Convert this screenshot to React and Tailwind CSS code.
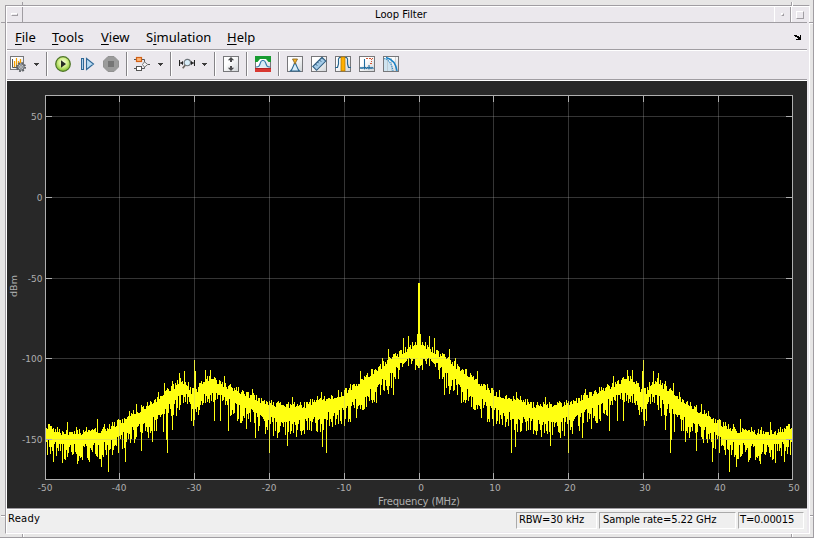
const MENU = [
  { key: "F", rest: "ile", width: "w-[37px]" },
  { key: "T", rest: "ools", width: "w-[49px]" },
  { key: "V", rest: "iew", width: "w-[45px]" },
  { key: "S", mid: "i", rest: "mulation", width: "w-[81px]" },
  { key: "H", rest: "elp", width: "w-[40px]" },
];

// [x, top, bottom] of the solid part of the trace, left half only
const BAND = [
  [45, 428, 437], [60, 434, 442], [85, 435, 442], [100, 433, 441], [110, 429, 439],
  [120, 424, 434], [130, 416, 425], [140, 412, 422], [155, 403, 415], [170, 391, 402],
  [180, 384, 393], [188, 387, 391], [191, 394, 408], [196, 393, 408], [199, 389, 400],
  [204, 382, 393], [212, 380, 390], [222, 387, 394], [235, 392, 402], [250, 397, 407],
  [265, 404, 415], [275, 406, 416], [290, 407, 418], [305, 407, 417], [318, 402, 413],
  [330, 401, 410], [345, 394, 406], [355, 387, 398], [370, 377, 388], [385, 365, 375],
  [400, 355, 362], [412, 348, 355], [418, 346, 361],
];

const DIPS = {
  53: 462, 56: 456, 62: 463, 65: 460, 68: 453, 77: 464, 79: 456, 87: 458, 89: 462, 92: 452,
  101: 467, 108: 472, 112: 455, 122: 449, 125: 462, 131: 439, 136: 437, 141: 451, 147: 432,
  152: 442, 163: 432, 166: 440, 167: 453, 172: 430, 177: 408, 191: 421, 193: 426, 196: 412,
  214: 421, 220: 421, 228: 431, 237: 421, 246: 429, 255: 438, 258: 431, 265: 434, 269: 453,
  277: 438, 287: 446, 291: 431, 304: 434, 309: 430, 322: 447, 326: 453, 332: 427, 344: 426,
  350: 422, 356: 418, 364: 409, 366: 407, 376: 403, 388: 394, 393: 395, 398: 379, 408: 366,
  415: 370,
};

const PEAKS = {
  67: 422, 76: 427, 86: 427, 97: 419, 104: 424, 118: 419, 136: 404, 141: 405, 158: 392,
  164: 383, 172: 381, 179: 373, 184: 371, 194: 360, 195: 371, 205: 370, 210: 370, 224: 376,
  230: 384, 252: 389, 292: 397, 309: 402, 321: 392, 338: 390, 350: 384, 360: 371, 371: 369,
  382: 358, 388: 349, 403: 338, 408: 336, 417: 334, 418: 283,
};

const noise = (n) => {
  const v = Math.sin(n * 127.1 + 11.7) * 43758.5453;
  return v - Math.floor(v);
};

function column(x) {
  const i = Math.max(1, BAND.findIndex((p) => p[0] >= x));
  const [x0, t0, b0] = BAND[i - 1];
  const [x1, t1, b1] = BAND[i];
  const k = (x - x0) / (x1 - x0);
  const top = t0 + (t1 - t0) * k - noise(x) * 7 + 1;
  const tail = x > 180 && x < 230 ? 12 : x > 395 ? 9 : 19;
  const bottom = b0 + (b1 - b0) * k + 1 + Math.pow(noise(x + 900), 1.5) * tail;
  return [Math.round(PEAKS[x] ?? top), Math.round(DIPS[x] ?? bottom)];
}

// the spectrum is symmetric around 0 MHz
let trace = "";
for (let x = 45; x <= 418; x++) {
  const [top, bottom] = column(x);
  trace += `M${x} ${top}h1V${bottom}h-1z`;
  trace += `M${837 - x} ${top}h1V${bottom}h-1z`;
}

const X_TICKS = [
  [45, "-50"], [119, "-40"], [194, "-30"], [269, "-20"], [344, "-10"], [419, "0"],
  [493, "10"], [568, "20"], [643, "30"], [718, "40"], [792, "50"],
];
const Y_TICKS = [[116, "50"], [197, "0"], [278, "-50"], [358, "-100"], [439, "-150"]];

const Spectrum = () => (
  <svg
    viewBox="7 81 800 427"
    className="block h-[427px] w-[800px] bg-[#282828]"
    fontFamily="'DejaVu Sans', sans-serif"
    fontSize="9"
    fill="#afafaf"
  >
    <g shapeRendering="crispEdges">
      <rect x="45" y="95" width="748" height="385" fill="#000" />
      <path d={trace} fill="#ffff11" />
      {X_TICKS.slice(1, -1).map(([x]) => (
        <g key={x}>
          <rect x={x} y="96" width="1" height="383" opacity="0.3" />
          <rect x={x} y="96" width="1" height="6" />
          <rect x={x} y="473" width="1" height="6" />
        </g>
      ))}
      {Y_TICKS.map(([y]) => (
        <g key={y}>
          <rect x="46" y={y} width="746" height="1" opacity="0.3" />
          <rect x="46" y={y} width="6" height="1" />
          <rect x="786" y={y} width="6" height="1" />
        </g>
      ))}
      {/* redraw the carrier over the centre grid line */}
      <rect x="418" y="283" width="2" height="78" fill="#ffff11" />
      <path d="M45.5 95.5h747v384h-747z" fill="none" stroke="#afafaf" />
    </g>
    {X_TICKS.map(([x, label]) => (
      <text key={label} x={label[0] === "-" ? x + 0.2 : x + 2} y="491" textAnchor="middle">{label}</text>
    ))}
    {Y_TICKS.map(([y, label]) => (
      <text key={label} x="42.5" y={y + 4} textAnchor="end">{label}</text>
    ))}
    <text x="419" y="505" fontSize="10" textAnchor="middle" textLength="82">Frequency (MHz)</text>
    <text transform="translate(17 286) rotate(-90)" fontSize="9.5" textAnchor="middle">dBm</text>
  </svg>
);

const Icon = ({ className = "", children }) => (
  <svg viewBox="0 0 16 16" className={`h-4 w-4 shrink-0 ${className}`} fill="none">{children}</svg>
);

const Box = () => (
  <rect x="0.5" y="0.5" width="15" height="15" fill="url(#paper)" stroke="#77777a" />
);

const Arrow = ({ className = "" }) => (
  <svg viewBox="0 0 5 3" className={`h-[3px] w-[5px] shrink-0 ${className}`}>
    <path d="M0 0h5v1H4v1H3v1H2V2H1V1H0z" fill="#3c3c3c" shapeRendering="crispEdges" />
  </svg>
);

const Separator = ({ className = "" }) => (
  <div className={`h-6 w-0.5 shrink-0 border-l border-[#858387] bg-white ${className}`} />
);

const Toolbar = () => (
  <div className="flex h-[28px] items-center pb-0.5 pl-[3px]">
    <svg className="h-0 w-0">
      <defs>
        <linearGradient id="paper" x1="0" y1="0" x2="1" y2="1">
          <stop offset="0.35" stopColor="#fff" />
          <stop offset="1" stopColor="#cfd3d6" />
        </linearGradient>
        <radialGradient id="run" cx="0.5" cy="0.4" r="0.6">
          <stop offset="0" stopColor="#fbffe8" />
          <stop offset="0.5" stopColor="#d3ef8c" />
          <stop offset="1" stopColor="#7dbb2a" />
        </radialGradient>
      </defs>
    </svg>
    <Icon>
      <rect x="0.5" y="0.5" width="13" height="13" fill="url(#paper)" stroke="#77777a" />
      <path d="M2.5 3v8.5H9" stroke="#58585a" />
      <path d="M4.5 5v6M6.5 2v9M8.5 5v4M10.5 3v4" stroke="#f5a000" strokeWidth="1.2" />
      <circle cx="11" cy="11" r="4.1" stroke="#5c6064" strokeWidth="1.8" strokeDasharray="1.8 1.4" />
      <circle cx="11" cy="11" r="3.2" fill="#bfc3c8" stroke="#606469" />
      <circle cx="11" cy="11" r="1.3" fill="#f5f5f5" stroke="#65696d" strokeWidth="0.8" />
    </Icon>
    <Arrow className="ml-2" />
    <Separator className="ml-[7px]" />
    <Icon className="ml-[7px]">
      <circle cx="8" cy="8" r="7.3" fill="url(#run)" stroke="#4d7328" strokeWidth="1.2" />
      <path d="M6 4.2v7.6L11 8z" fill="#262b25" />
    </Icon>
    <Icon className="ml-[10px]">
      <path d="M.5 2.5h2v11h-2zM5.5 2.5v11L12.5 8z" fill="#b9dcf4" stroke="#2f6796" strokeWidth="1.1" />
    </Icon>
    <Icon className="ml-1.5">
      <path d="M5 .5h6L15.5 5v6L11 15.5H5L.5 11V5z" fill="#9b9b9b" stroke="#929292" strokeLinejoin="round" />
      <rect x="5" y="5" width="6" height="6" fill="#757575" />
    </Icon>
    <Separator className="ml-[7px]" />
    <Icon className="ml-1.5">
      <path d="M0 3.5h10.5V7M0 12.5h2M8 12.5h2.5V10" stroke="#555" />
      <rect x="2.5" y="1.5" width="5" height="4" fill="#ffb676" stroke="#d26116" strokeWidth="1.2" />
      <rect x="2.5" y="10.5" width="5" height="4" fill="#fff" stroke="#555" />
      <path d="M14 8.5h2" stroke="#555" />
      <path d="M10.5 5.8 13.7 8.5 10.5 11.2 8.5 8.5z" fill="#f3f3f3" stroke="#6b6b6b" strokeWidth="0.9" />
    </Icon>
    <Arrow className="ml-2" />
    <Separator className="ml-[7px]" />
    <Icon className="ml-[7px]">
      <path d="M.5 4v6M15.5 4v6M1 7h3M12 7h3" stroke="#222" strokeWidth="1.1" />
      <path d="M4 4.8v4.4L1.8 7zM12 4.8v4.4L14.2 7z" fill="#222" />
      <circle cx="8.3" cy="6.6" r="3.2" fill="#d8eef9" stroke="#6e7479" strokeWidth="1.1" />
      <path d="m6.2 9.2-2.5 3" stroke="#6b655f" strokeWidth="1.7" />
    </Icon>
    <Arrow className="ml-[7px]" />
    <Separator className="ml-[7px]" />
    <Icon className="ml-[7px]">
      <Box />
      <path d="M8 1 4.8 4.2H7V6h2V4.2h2.2zM8 15l-3.2-3.2H7V10h2v1.8h2.2z" fill="#4a4a4c" />
    </Icon>
    <Separator className="ml-[7px]" />
    <Icon className="ml-[7px]">
      <Box />
      <path d="M0 0h16v6h-2.5L11 3H5L2.5 6H0z" fill="#189b31" />
      <path d="M0 12h16v4H0z" fill="#d93932" />
      <path d="M0 12.5h16" stroke="#a71e21" strokeWidth="0.8" />
      <path d="M1 11c3 0 3.5-1 4.3-4S7 4.5 8 4.5s1.8-.4 2.7 2.5S12 11 15 11" fill="#d8ebf5" stroke="#3178a8" strokeWidth="1.1" />
    </Icon>
    <Separator className="ml-[7px]" />
    <Icon className="ml-[7px]">
      <Box />
      <path d="M3.5 15C6 13 6.5 8 8 7c1.5 1 2 6 4.5 8z" fill="#d8edf9" stroke="#27658f" strokeWidth="1.1" />
      <path d="M5.5 3h5L8.7 6.3v1.2H7.3V6.3z" fill="#f8b522" stroke="#8a6725" strokeWidth="0.9" />
    </Icon>
    <Icon className="ml-2">
      <Box />
      <path d="M1.8 10.5 11 1.3l3.8 3.8-9.2 9.2z" fill="#a5cce8" stroke="#315f82" strokeWidth="1.1" />
      <path d="m4.5 8 1.7 1.7M6.5 6l1.2 1.2M8.5 4l1.7 1.7M10.5 2l1.2 1.2" stroke="#244e70" strokeWidth="0.9" />
    </Icon>
    <Icon className="ml-2">
      <Box />
      <path d="M0 11.5h2.5L3.5 8V3l1-1.5h7l1 1.5v5l1 3.5H16" stroke="#27658f" strokeWidth="1.2" />
      <rect x="6" y="1" width="4" height="14" fill="#ffb000" stroke="#b57900" strokeWidth="0.8" />
    </Icon>
    <Icon className="ml-2">
      <Box />
      <path d="m1 12.5 1-1 1 1 1-1 1.5 1V3v9.5l1-1 1 1 1-1 1.5 1V9v3.5l1-1 1 1 1-1 1.5 1" stroke="#1f6c9f" strokeWidth="1.1" />
      <path d="M7 2.5h7M11 7.5h3" stroke="#d35432" strokeDasharray="2 1" />
      <path d="M12.5 3v4" stroke="#d35432" strokeDasharray="1 1" />
    </Icon>
    <Icon className="ml-2">
      <Box />
      <path d="M1 2c5 1 8 6 9 13H1z" fill="#cfe4f0" />
      <path d="M4.5 3v12M8.5 2v13M12.5 1v14" stroke="#b8c1c7" strokeWidth="0.7" />
      <path d="M1 2.5C6 3.5 9 8 10 15" stroke="#3d8fc4" strokeWidth="1.1" strokeDasharray="1.5 .7" />
      <path d="M3 1.5C9 3 13 8 14 15" stroke="#1781c5" strokeWidth="1.4" />
    </Icon>
  </div>
);

const TitleBar = () => (
  <div className="flex h-4 border-b border-[#a09da2]">
    <div className="flex w-4 items-center justify-center border-r border-[#a09da2]">
      <div className="h-[3px] w-[7px] border border-t-white border-l-white border-r-[#a09da2] border-b-[#a09da2]" />
    </div>
    <div className="flex-1 pt-px pl-[5px] text-center text-[10px] leading-[13px] text-black">Loop Filter</div>
    <div className="flex w-[17px] items-center justify-center border-r border-l border-l-white border-r-[#a09da2]">
      <div className="h-[3px] w-[3px] border border-t-white border-l-white border-r-[#a09da2] border-b-[#a09da2]" />
    </div>
    <div className="flex w-4 items-center justify-center border-l border-white">
      <div className="h-2 w-2 border border-t-white border-l-white border-r-[#a09da2] border-b-[#a09da2]" />
    </div>
  </div>
);

const MenuBar = () => (
  <div className="flex h-[26px] items-center pt-0.5 pl-2 text-[13px] text-black">
    {MENU.map((item) => (
      <span key={item.key} className={`${item.width} font-['Noto_Sans',sans-serif] leading-[18px]`}>
        {item.mid ? item.key : null}
        <span className="underline decoration-1 underline-offset-2">{item.mid ?? item.key}</span>
        {item.rest}
      </span>
    ))}
    <svg viewBox="0 0 8 6" className="mr-[5px] ml-auto h-1.5 w-2">
      <path d="M0 1h3v1h2v1h1V1h1v5H2V5h2V4H3V3H1V2H0z" fill="#000" shapeRendering="crispEdges" />
    </svg>
  </div>
);

const Rule = () => <div className="h-0.5 border-t border-[#a09da2] bg-white" />;

const StatusField = ({ className, children }) => (
  <div className={`h-[17px] border border-t-[#aaa] border-l-[#aaa] border-r-white border-b-white leading-[14px] ${className}`}>
    {children}
  </div>
);

const StatusBar = () => (
  <div className="flex h-[22px] bg-[#efefef] pt-0.5 text-[10px] whitespace-nowrap text-black">
    <div className="flex-1 pl-px leading-[14px] tracking-[0.02em]">Ready</div>
    <StatusField className="mr-0.5 w-[81px] pl-0.5 tracking-[-0.01em]">RBW=30 kHz</StatusField>
    <StatusField className="mr-0.5 w-[137px] pl-[3px] tracking-[-0.01em]">Sample rate=5.22 GHz</StatusField>
    <StatusField className="mr-[3px] w-[66px] pl-px tracking-[-0.02em]">T=0.00015</StatusField>
  </div>
);

// resize handles cut into the window border
const FrameNotches = () => (
  <>
    <div className="absolute top-[22px] left-px h-px w-1 bg-[#a09da2]" />
    <div className="absolute top-0.5 left-[22px] h-1 w-px bg-[#a09da2]" />
    <div className="absolute top-0.5 left-[791px] h-1 w-0.5 border-l border-[#a09da2] bg-white" />
    <div className="absolute top-[22px] left-[809px] h-0.5 w-1 border-t border-[#a09da2] bg-white" />
    <div className="absolute top-[515px] left-px h-0.5 w-1 border-t border-[#a09da2] bg-white" />
    <div className="absolute top-[515px] left-[810px] h-0.5 w-[3px] border-t border-[#a09da2] bg-white" />
    <div className="absolute top-[534px] left-[22px] h-[3px] w-0.5 border-l border-[#a09da2] bg-white" />
    <div className="absolute top-[534px] left-[791px] h-[3px] w-0.5 border-l border-[#a09da2] bg-white" />
  </>
);

const App = () => {
  return (
    <div className="relative h-[538px] w-[814px] overflow-hidden border-r border-b border-[#a09da2] bg-[#e7e6e6] pt-[5px] pl-[5px] font-['DejaVu_Sans',sans-serif]">
      <div className="h-[529px] w-[805px] border border-t-[#a09da2] border-l-[#a09da2] border-r-white border-b-white bg-[#ebe8ed]">
        <div className="h-full border-t border-l border-white pr-0.5">
          <TitleBar />
          <MenuBar />
          <Rule />
          <Toolbar />
          <Rule />
          <Spectrum />
          <Rule />
          <StatusBar />
        </div>
      </div>
      <FrameNotches />
    </div>
  );
};

export default App;
